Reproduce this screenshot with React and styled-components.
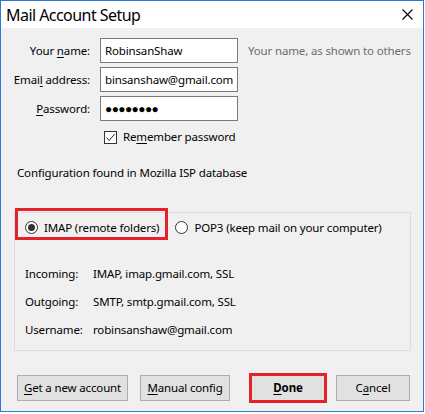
import { Fragment } from 'react';
import styled, { createGlobalStyle } from 'styled-components';

const GlobalStyle = createGlobalStyle`
  body {
    margin: 0;
    background: #ffffff;
    font-family: "Noto Sans", "Open Sans", sans-serif;
  }
  * {
    box-sizing: border-box;
  }
`

const Window = styled.div`
  width: 424px;
  height: 412px;
  border: 1px solid #2d7bd0;
  display: flex;
  flex-direction: column;
  background: #f0f0f0;
  color: #000;
  font-size: 11.5px;
  letter-spacing: -0.15px;
  line-height: 16px;
`

const TitleBar = styled.div`
  height: 27px;
  flex-shrink: 0;
  background: #ffffff;
  display: flex;
  align-items: center;
  justify-content: space-between;
  padding-left: 5px;
  h1 {
    margin: 0;
    font-size: 16px;
    font-weight: 400;
    letter-spacing: -0.55px;
    line-height: 20px;
  }
`

const CloseBtn = styled.div`
  width: 32px;
  height: 27px;
  display: flex;
  align-items: center;
  justify-content: center;
`

const Body = styled.div`
  flex: 1;
  display: flex;
  flex-direction: column;
  padding-top: 10px;
`

const Form = styled.div`
  display: grid;
  grid-template-columns: 89px 138px 1fr;
  column-gap: 10px;
  row-gap: 4px;
  align-items: center;
`

const Label = styled.label`
  text-align: right;
`

const Input = styled.div`
  height: 25px;
  border: 1px solid #7a7a7a;
  background: #fff;
  display: flex;
  align-items: center;
  padding: 0 4px;
  font-size: ${p => (p.$secret ? '12px' : '11.5px')};
  letter-spacing: ${p => (p.$secret ? '-0.6px' : '-0.15px')};
  white-space: nowrap;
  overflow: hidden;
`

const Hint = styled.span`
  color: #6d6d6d;
  white-space: nowrap;
`

const CheckRow = styled.div`
  grid-column: 2 / 4;
  display: flex;
  align-items: center;
  gap: 6px;
  height: 16px;
  padding-left: 4px;
  margin-top: 4px;
`

const CheckBox = styled.span`
  width: 13px;
  height: 13px;
  border: 1px solid #333;
  background: #fff;
  display: flex;
  align-items: center;
  justify-content: center;
`

const Notice = styled.p`
  margin: 20px 0 0 16px;
`

const Group = styled.div`
  margin: 31px 12px 0 13px;
  border: 1px solid #dcdcdc;
  height: 139px;
  display: flex;
  flex-direction: column;
`

const RadioRow = styled.div`
  display: flex;
  margin-top: -5px;
`

const RadioOption = styled.div`
  display: flex;
  align-items: center;
  gap: 6px;
  height: 32px;
  padding: 7px 6px 0 ${p => (p.$marked ? '7px' : '4px')};
  border: 3px solid ${p => (p.$marked ? '#e5212c' : 'transparent')};
`

const Radio = styled.span`
  width: 13px;
  height: 13px;
  border-radius: 50%;
  border: 1px solid #333;
  background: #fff;
  display: flex;
  align-items: center;
  justify-content: center;
  &::after {
    content: '';
    width: 7px;
    height: 7px;
    border-radius: 50%;
    background: ${p => (p.$on ? '#333' : 'transparent')};
  }
`

const InfoGrid = styled.div`
  display: grid;
  grid-template-columns: 68px 1fr;
  row-gap: 12px;
  padding: 26px 0 0 10px;
`

const ButtonBar = styled.div`
  display: flex;
  align-items: center;
  padding: 24px 0 0 16px;
`

const Button = styled.div`
  height: 26px;
  width: ${p => p.$w};
  margin-left: ${p => p.$ml || '0'};
  border: 1px solid #adadad;
  background: #e1e1e1;
  display: flex;
  align-items: center;
  justify-content: center;
  font-weight: ${p => (p.$bold ? 700 : 400)};
  outline: ${p => (p.$marked ? '3px solid #e5212c' : 'none')};
  outline-offset: -1px;
`

const Key = styled.u`
  text-underline-offset: 2px;
`

const App = () => {
  const info = [
    ['Incoming:', 'IMAP, imap.gmail.com, SSL'],
    ['Outgoing:', 'SMTP, smtp.gmail.com, SSL'],
    ['Username:', 'robinsanshaw@gmail.com'],
  ]
  return (
    <>
      <GlobalStyle />
      <Window>
        <TitleBar>
          <h1>Mail Account Setup</h1>
          <CloseBtn>
            <svg width="11" height="11" viewBox="0 0 11 11">
              <path d="M0.5 0.5 L10.5 10.5 M10.5 0.5 L0.5 10.5" stroke="#000" strokeWidth="1.1" />
            </svg>
          </CloseBtn>
        </TitleBar>
        <Body>
          <Form>
            <Label>Your <Key>n</Key>ame:</Label>
            <Input>RobinsanShaw</Input>
            <Hint>Your name, as shown to others</Hint>
            <Label>Emai<Key>l</Key> address:</Label>
            <Input>binsanshaw@gmail.com</Input>
            <span />
            <Label><Key>P</Key>assword:</Label>
            <Input $secret>{'\u25CF'.repeat(8)}</Input>
            <span />
            <CheckRow>
              <CheckBox>
                <svg width="11" height="11" viewBox="0 0 11 11">
                  <path d="M1.5 5.5 L4.2 8.5 L9.8 1.8" stroke="#333" strokeWidth="1" fill="none" />
                </svg>
              </CheckBox>
              <span>Re<Key>m</Key>ember password</span>
            </CheckRow>
          </Form>
          <Notice>Configuration found in Mozilla ISP database</Notice>
          <Group>
            <RadioRow>
              <RadioOption $marked>
                <Radio $on />
                <span>IMAP (remote folders)</span>
              </RadioOption>
              <RadioOption>
                <Radio />
                <span>POP3 (keep mail on your computer)</span>
              </RadioOption>
            </RadioRow>
            <InfoGrid>
              {info.map(([k, v]) => (
                <Fragment key={k}>
                  <span>{k}</span>
                  <span>{v}</span>
                </Fragment>
              ))}
            </InfoGrid>
          </Group>
          <ButtonBar>
            <Button $w="111px"><span><Key>G</Key>et a new account</span></Button>
            <Button $w="90px" $ml="12px"><span><Key>M</Key>anual config</span></Button>
            <Button $w="74px" $ml="21px" $bold $marked><span><Key>D</Key>one</span></Button>
            <Button $w="74px" $ml="11px"><span>C<Key>a</Key>ncel</span></Button>
          </ButtonBar>
        </Body>
      </Window>
    </>
  );
}

export default App;
